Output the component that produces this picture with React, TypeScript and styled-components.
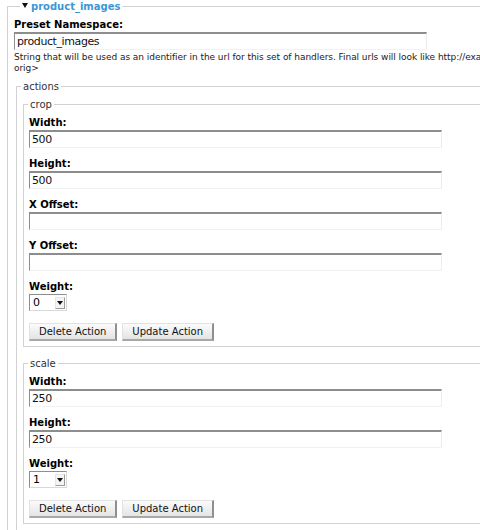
import React from "react";
import styled, { createGlobalStyle } from "styled-components";

const GlobalStyle = createGlobalStyle`
  html, body {
    margin: 0;
    padding: 0;
    background: #ffffff;
    overflow: hidden;
  }
  body {
    font-family: "DejaVu Sans", Verdana, sans-serif;
    color: #000000;
  }
`;

const Page = styled.div`
  padding: 0 0 0 7px;
  width: 620px;
`;

const Fieldset = styled.fieldset<{ $inset: number }>`
  margin: 0;
  border: 1px solid #d2d2d2;
  padding: 0 0 6px ${({ $inset }) => $inset}px;
  min-inline-size: 0;
`;

const OuterFieldset = styled(Fieldset)`
  padding-top: 5px;
`;

const GroupFieldset = styled(Fieldset)`
  margin: 7px 0 0 2px;
  padding-top: 5px;
`;

const ActionFieldset = styled(Fieldset)`
  margin: 0 0 10px 0;
  padding-top: 5px;
  padding-bottom: 5px;
`;

const Legend = styled.legend<{ $shift: number }>`
  padding: 0 2px;
  margin-left: ${({ $shift }) => $shift}px;
  font-size: 10px;
  line-height: 13px;
  color: #333333;
`;

const TitleLegend = styled(Legend)`
  font-size: 10px;
  font-weight: bold;
  color: #3b97d6;
  display: flex;
  align-items: center;
  gap: 3px;
`;

const Caret = styled.span`
  width: 0;
  height: 0;
  border-left: 3px solid transparent;
  border-right: 3px solid transparent;
  border-top: 5px solid #111111;
  margin-bottom: 3px;
`;

const Field = styled.div`
  margin-bottom: 9px;
`;

const Label = styled.label`
  display: block;
  font-size: 10px;
  font-weight: bold;
  line-height: 14px;
  padding-top: 1px;
  margin-top: -1px;
`;

const TextInput = styled.input`
  display: block;
  box-sizing: border-box;
  width: 413px;
  height: 18px;
  margin: 0;
  padding: 0 2px;
  border-style: solid;
  border-width: 2px 1px 1px 1px;
  border-color: #8d8d8d #ececec #f2f2f2 #8d8d8d;
  font-family: "DejaVu Sans", sans-serif;
  font-size: 11px;
  letter-spacing: -0.4px;
  color: #111111;
  background: #ffffff;
  outline: none;
`;

const Description = styled.div`
  font-size: 9px;
  letter-spacing: -0.05px;
  line-height: 10.5px;
  margin-top: 2px;
  color: #222222;
`;

const NoWrap = styled.span`
  white-space: nowrap;
`;

const Select = styled.div`
  box-sizing: border-box;
  display: flex;
  align-items: stretch;
  width: 38px;
  height: 17px;
  border-style: solid;
  border-width: 1px;
  border-color: #8d8d8d #d8d8d8 #d8d8d8 #8d8d8d;
  background: #ffffff;
`;

const SelectValue = styled.span`
  flex: 1;
  font-size: 11px;
  line-height: 15px;
  padding-left: 3px;
`;

const SelectArrow = styled.span`
  width: 10px;
  margin: 2px 1px 1px 0;
  box-sizing: border-box;
  border: 1px solid;
  border-color: #e6e6e6 #9a9a9a #9a9a9a #e6e6e6;
  background: #f4f4f4;
  display: flex;
  align-items: center;
  justify-content: center;

  &::after {
    content: "";
    border-left: 3px solid transparent;
    border-right: 3px solid transparent;
    border-top: 4px solid #111111;
  }
`;

const Buttons = styled.div`
  display: flex;
  gap: 5px;
  margin-top: 12px;
`;

const Button = styled.button`
  box-sizing: border-box;
  height: 18px;
  margin: 0;
  padding: 0 9px;
  font-family: "DejaVu Sans", sans-serif;
  font-size: 10px;
  line-height: 14px;
  color: #111111;
  border-style: solid;
  border-width: 1px 2px 2px 1px;
  border-color: #e2e2e2 #8f8f8f #a8a8a8 #e2e2e2;
  border-radius: 0;
  background: linear-gradient(#fbfbfb, #e4e4e4);
`;

type Action = {
  name: string;
  fields: { label: string; value: string }[];
  weight: string;
};

const actions: Action[] = [
  {
    name: "crop",
    fields: [
      { label: "Width:", value: "500" },
      { label: "Height:", value: "500" },
      { label: "X Offset:", value: "" },
      { label: "Y Offset:", value: "" },
    ],
    weight: "0",
  },
  {
    name: "scale",
    fields: [
      { label: "Width:", value: "250" },
      { label: "Height:", value: "250" },
    ],
    weight: "1",
  },
];

const ActionForm = ({ action }: { action: Action }) => (
  <ActionFieldset $inset={5}>
    <Legend $shift={-1}>{action.name}</Legend>
    {action.fields.map((f) => (
      <Field key={f.label}>
        <Label>{f.label}</Label>
        <TextInput defaultValue={f.value} />
      </Field>
    ))}
    <Label>Weight:</Label>
    <Select>
      <SelectValue>{action.weight}</SelectValue>
      <SelectArrow />
    </Select>
    <Buttons>
      <Button>Delete Action</Button>
      <Button>Update Action</Button>
    </Buttons>
  </ActionFieldset>
);

export default function App() {
  return (
    <Page>
      <GlobalStyle />
      <OuterFieldset $inset={6}>
        <TitleLegend $shift={6}>
          <Caret />
          product_images
        </TitleLegend>
        <Label>Preset Namespace:</Label>
        <TextInput defaultValue="product_images" />
        <Description>
          <NoWrap>
            String that will be used as an identifier in the url for this set of handlers. Final urls will look
            like http://example.com/files/imagecache/&lt;preset-namespace&gt;/&lt;path-to-
          </NoWrap>
          <br />
          orig&gt;
        </Description>
        <GroupFieldset $inset={6}>
          <Legend $shift={-2}>actions</Legend>
          {actions.map((a) => (
            <ActionForm key={a.name} action={a} />
          ))}
        </GroupFieldset>
      </OuterFieldset>
    </Page>
  );
}
